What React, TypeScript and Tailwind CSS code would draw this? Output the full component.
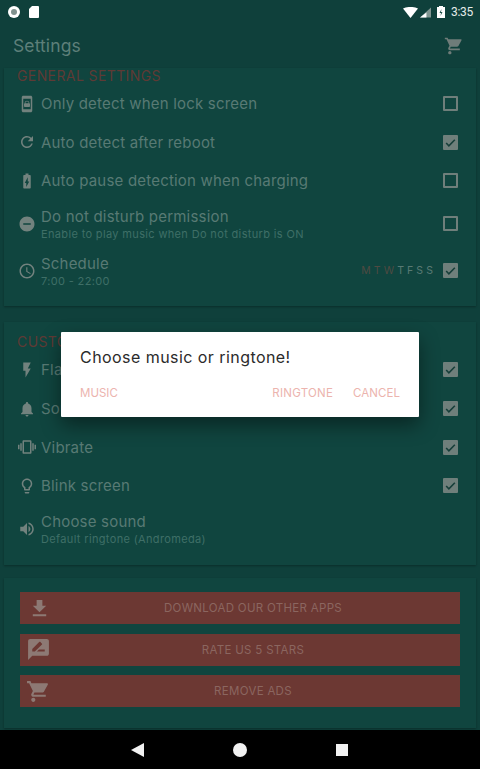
import { ReactNode } from 'react'

const font = { fontFamily: '"Inter", "Liberation Sans", sans-serif' }

function Box({ checked }: { checked?: boolean }) {
  if (checked) {
    return (
      <div className="w-[15px] h-[15px] rounded-[1px] bg-[#6f7f7b] flex items-center justify-center shrink-0">
        <svg width="13" height="13" viewBox="0 0 24 24" fill="none" stroke="#173f3a" strokeWidth="3">
          <path d="M4 13l5 5L20 7" />
        </svg>
      </div>
    )
  }
  return <div className="w-[15px] h-[15px] rounded-[1px] border-2 border-[#6f7f7b] shrink-0" />
}

function Icon({ d, size = 20, fill = '#72827e' }: { d: string; size?: number; fill?: string }) {
  return (
    <svg width={size} height={size} viewBox="0 0 24 24" fill={fill} className="shrink-0">
      <path d={d} />
    </svg>
  )
}

const icons = {
  lock: 'M17 1H7C5.9 1 5 1.9 5 3v18c0 1.1.9 2 2 2h10c1.1 0 2-.9 2-2V3c0-1.1-.9-2-2-2zm0 18H7V5h10v14zm-2-8v-1c0-1.4-1.3-2.5-3-2.5S9 8.600 9 10v1c-.5 0-1 .5-1 1v3c0 .5.5 1 1 1h6c.5 0 1-.5 1-1v-3c0-.5-.5-1-1-1zm-1 0h-4v-1c0-.8.9-1.300 2-1.300s2 .5 2 1.300v1z',
  refresh: 'M17.65 6.35A7.958 7.958 0 0 0 12 4c-4.420 0-7.990 3.580-7.990 8s3.570 8 7.990 8c3.730 0 6.840-2.550 7.730-6h-2.080A5.990 5.990 0 0 1 12 18c-3.310 0-6-2.690-6-6s2.690-6 6-6c1.660 0 3.140.69 4.220 1.780L13 11h7V4l-2.350 2.350z',
  battery: 'M15.670 4H14V2h-4v2H8.330C7.600 4 7 4.600 7 5.330v15.330C7 21.400 7.600 22 8.330 22h7.330c.74 0 1.340-.6 1.340-1.330V5.330C17 4.600 16.400 4 15.670 4zM11 20v-5.500H9L13 7v5.500h2L11 20z',
  dnd: 'M12 2C6.480 2 2 6.480 2 12s4.480 10 10 10 10-4.480 10-10S17.520 2 12 2zm5 11H7v-2h10v2z',
  clock: 'M11.990 2C6.470 2 2 6.480 2 12s4.470 10 9.990 10C17.520 22 22 17.520 22 12S17.520 2 11.990 2zM12 20c-4.420 0-8-3.580-8-8s3.580-8 8-8 8 3.580 8 8-3.580 8-8 8zm.5-13H11v6l5.250 3.150.75-1.230-4.500-2.670z',
  flash: 'M7 2v11h3v9l7-12h-4l4-8z',
  bell: 'M12 22c1.100 0 2-.9 2-2h-4c0 1.100.9 2 2 2zm6-6v-5c0-3.070-1.630-5.640-4.500-6.320V4c0-.83-.67-1.500-1.500-1.500s-1.500.67-1.500 1.500v.68C7.640 5.360 6 7.920 6 11v5l-2 2v1h16v-1l-2-2z',
  vibrate: 'M0 15h2V9H0v6zm3 2h2V7H3v10zm19-8v6h2V9h-2zm-3 8h2V7h-2v10zM16.500 3h-9C6.670 3 6 3.670 6 4.500v15c0 .83.67 1.500 1.500 1.500h9c.83 0 1.500-.67 1.500-1.500v-15c0-.83-.67-1.500-1.500-1.500zM16 19H8V5h8v14z',
  bulb: 'M9 21c0 .55.45 1 1 1h4c.55 0 1-.45 1-1v-1H9v1zm3-19C8.140 2 5 5.140 5 9c0 2.380 1.190 4.470 3 5.740V17c0 .55.45 1 1 1h6c.55 0 1-.45 1-1v-2.260c1.810-1.270 3-3.360 3-5.740 0-3.860-3.140-7-7-7zm2.850 11.100l-.85.6V16h-4v-2.300l-.85-.6A4.997 4.997 0 0 1 7 9c0-2.760 2.240-5 5-5s5 2.240 5 5c0 1.630-.8 3.160-2.150 4.100z',
  volume: 'M3 9v6h4l5 5V4L7 9H3zm13.500 3c0-1.770-1.020-3.290-2.500-4.030v8.050c1.480-.73 2.500-2.250 2.500-4.020zM14 3.230v2.060c2.890.86 5 3.540 5 6.710s-2.110 5.850-5 6.710v2.060c4.010-.91 7-4.490 7-8.770s-2.990-7.860-7-8.770z',
  cart: 'M7 18c-1.100 0-1.990.9-1.990 2S5.900 22 7 22s2-.9 2-2-.9-2-2-2zM1 2v2h2l3.600 7.590-1.350 2.450c-.16.28-.25.61-.25.96 0 1.100.9 2 2 2h12v-2H7.420c-.14 0-.25-.11-.25-.25l.03-.12.9-1.630h7.450c.75 0 1.410-.41 1.750-1.030l3.580-6.490A1 1 0 0 0 20.550 4H5.210l-.94-2H1z',
  download: 'M19 9h-4V3H9v6H5l7 7 7-7zM5 18v2h14v-2H5z',
  rate: 'M20 2H4c-1.100 0-1.990.9-1.990 2L2 22l4-4h14c1.100 0 2-.9 2-2V4c0-1.100-.9-2-2-2zM6 14v-2.470l6.880-6.880c.2-.2.51-.2.71 0l1.770 1.770c.2.2.2.51 0 .71L8.470 14H6zm12 0h-7.500l2-2H18v2z',
}

function Row({
  icon,
  title,
  sub,
  checked,
  box = true,
  extra,
  h = 'h-[38.500px]',
}: {
  icon: string
  title: string
  sub?: string
  checked?: boolean
  box?: boolean
  extra?: ReactNode
  h?: string
}) {
  return (
    <div className={`flex items-center pl-[12px] pr-[18px] ${h}`}>
      <div className="w-[21px] flex justify-center shrink-0">
        <Icon d={icon} size={18} />
      </div>
      <div className="ml-[4px] pt-[1px] flex-1 min-w-0 whitespace-nowrap">
        <div className="text-[15px] tracking-[0.2px] leading-[18px] text-[#587a74]">{title}</div>
        {sub && <div className="text-[11px] tracking-[0.35px] leading-[13px] mt-[2px] text-[#3f6f67]">{sub}</div>}
      </div>
      {extra}
      {box && <Box checked={checked} />}
    </div>
  )
}

function Section({ children, className }: { children: ReactNode; className?: string }) {
  return <div className={`mx-[4px] bg-[#10453f] shadow-[0_1px_2px_rgba(0,0,0,0.3)] ${className}`}>{children}</div>
}

function ActionButton({ icon, label, pad, size }: { icon: string; label: string; pad: string; size: number }) {
  return (
    <div className="relative h-[32px] bg-[#6c3833] flex items-center justify-center">
      <div className={`absolute top-0 bottom-0 flex items-center ${pad}`}>
        <Icon d={icon} size={size} fill="#8d7974" />
      </div>
      <span className="text-[11.500px] tracking-[0.3px] text-[#8b6660] pl-[26px] pt-[2px]">{label}</span>
    </div>
  )
}

export default function App() {
  return (
    <div className="relative w-[480px] h-[769px] overflow-hidden bg-[#0f403b]" style={font}>
      {/* status bar */}
      <div className="h-[24px] flex items-center justify-between pl-[8px] pr-[7px]">
        <div className="flex items-center gap-[9px]">
          <div className="w-[12px] h-[12px] rounded-full bg-white flex items-center justify-center">
            <div className="w-[6px] h-[6px] rounded-full bg-[#7f918e]" />
          </div>
          <svg width="10" height="12" viewBox="0 0 10 12" fill="#fff">
            <path d="M3 0h6a1 1 0 0 1 1 1v10a1 1 0 0 1-1 1H1a1 1 0 0 1-1-1V3z" />
          </svg>
        </div>
        <div className="flex items-center">
          <svg width="15" height="11" viewBox="0 0 15 11" fill="#fff">
            <path d="M0 1.500C4-.6 11-.6 15 1.500L7.500 11z" />
          </svg>
          <svg width="11" height="11" viewBox="0 0 12 11" className="ml-[2px]">
            <path d="M12 0v11H0z" fill="#7f9490" />
            <path d="M7 5.500V11H0z" fill="#fff" />
          </svg>
          <svg width="8" height="12" viewBox="0 0 8 12" className="ml-[6px]">
            <path d="M2 0h4v1h2v11H0V1h2z" fill="#fff" />
            <path d="M4.500 3L2.500 7H4L3.500 10L5.500 6H4z" fill="#1f4f49" />
          </svg>
          <span className="ml-[6px] text-[12px] tracking-[-0.3px] text-[#e6ecea]" style={{ fontFamily: 'Roboto, sans-serif' }}>3:35</span>
        </div>
      </div>

      {/* toolbar */}
      <div className="h-[44px] flex items-center justify-between pl-[13px] pr-[16px]">
        <span className="text-[17.500px] tracking-[0.1px] text-[#5d7f79]">Settings</span>
        <Icon d={icons.cart} size={20} fill="#6f7c79" />
      </div>

      <Section className="h-[238px]">
        <div className="pl-[13px] h-[15px] mb-[1px] flex items-center text-[14px] text-[#5f3a35] tracking-[0.4px]">GENERAL SETTINGS</div>
        <Row icon={icons.lock} title="Only detect when lock screen" h="h-[39px]" />
        <Row icon={icons.refresh} title="Auto detect after reboot" checked />
        <Row icon={icons.battery} title="Auto pause detection when charging" />
        <Row
          icon={icons.dnd}
          title="Do not disturb permission"
          sub="Enable to play music when Do not disturb is ON"
          h="h-[47px]"
        />
        <Row
          icon={icons.clock}
          title="Schedule"
          sub="7:00 - 22:00"
          checked
          h="h-[47px]"
          extra={
            <span className="mr-[7px] text-[10.500px] tracking-[3.100px] text-[#587a74]">
              <span className="text-[#4f4a42]">MTW</span>TFSS
            </span>
          }
        />
      </Section>

      <Section className="h-[243px] mt-[16px]">
        <div className="pt-[11px] pl-[13px] h-[28px] flex items-center text-[14px] text-[#5f3a35] tracking-[0.4px]">CUSTOM</div>
        <Row icon={icons.flash} title="Flash" checked h="h-[39px]" />
        <Row icon={icons.bell} title="Sound" checked h="h-[39px]" />
        <Row icon={icons.vibrate} title="Vibrate" checked />
        <Row icon={icons.bulb} title="Blink screen" checked />
        <Row icon={icons.volume} title="Choose sound" sub="Default ringtone (Andromeda)" box={false} h="h-[47px]" />
      </Section>

      <Section className="h-[150px] mt-[13px] pt-[14px] px-[16px] flex flex-col gap-[9.500px]">
        <ActionButton icon={icons.download} label="DOWNLOAD OUR OTHER APPS" pad="left-[8px]" size={23} />
        <ActionButton icon={icons.rate} label="RATE US 5 STARS" pad="left-[6px]" size={25} />
        <ActionButton icon={icons.cart} label="REMOVE ADS" pad="left-[6px]" size={25} />
      </Section>

      {/* nav bar */}
      <div className="absolute left-0 right-0 bottom-0 h-[39px] bg-black flex items-center">
        <svg width="13" height="14" viewBox="0 0 13 14" fill="#f2f2f2" className="ml-[131px]">
          <path d="M0 7L13 0v14z" />
        </svg>
        <div className="ml-[89px] w-[14px] h-[14px] rounded-full bg-[#f2f2f2]" />
        <div className="ml-[89px] w-[12px] h-[12px] bg-[#f2f2f2]" />
      </div>

      {/* dialog */}
      <div className="absolute left-[61px] top-[332px] w-[358px] h-[85px] bg-white rounded-[1px] shadow-[0_8px_20px_rgba(0,0,0,0.45)]">
        <div className="absolute left-[19px] top-[15px] text-[16px] tracking-[0.44px] leading-[20px] text-[#2b2b2b]">Choose music or ringtone!</div>
        <div className="absolute left-[19px] right-[19px] top-[53px] flex text-[11.500px] leading-[16px] text-[#ecb4ae]">
          <span>MUSIC</span>
          <span className="ml-auto tracking-[0.25px]">RINGTONE</span>
          <span className="ml-[20px] tracking-[0.05px]">CANCEL</span>
        </div>
      </div>
    </div>
  )
}
